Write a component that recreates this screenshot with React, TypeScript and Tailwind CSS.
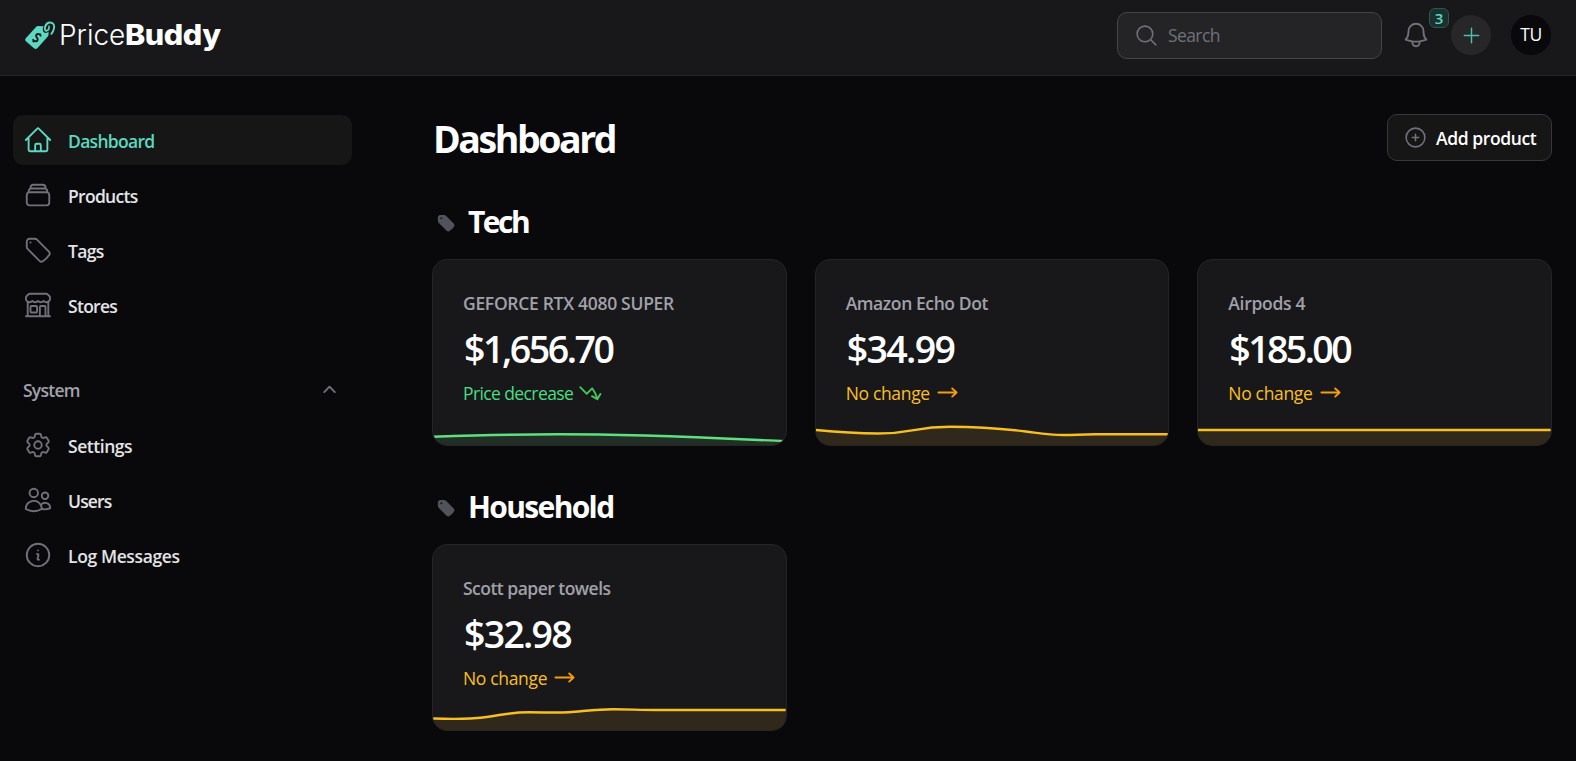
import type { ComponentType } from "react";
import {
  HiOutlineHome,
  HiOutlineRectangleStack,
  HiOutlineTag,
  HiOutlineBuildingStorefront,
  HiOutlineCog6Tooth,
  HiOutlineUsers,
  HiOutlineInformationCircle,
  HiOutlineMagnifyingGlass,
  HiOutlineBell,
  HiOutlinePlus,
  HiOutlinePlusCircle,
  HiTag,
  HiMiniChevronUp,
  HiMiniArrowLongRight,
  HiMiniArrowTrendingDown,
} from "react-icons/hi2";

type Icon = ComponentType<{ className?: string }>;

function Logo() {
  return (
    <div className="flex items-center">
      <svg viewBox="0 0 31 29" className="h-[29px] w-[31px]" fill="none">
        <path
          d="M13 5.1 18.6 5.2C17.6 7 17.4 9.4 18.6 11 20 12.6 22.4 12.2 23.5 10.6L23.6 13Q23.6 14.6 22.8 15.6L12.3 27.2Q10.7 28.6 9 27.2L.9 20.2Q-.5 18.7 .8 17.2L11 6Q11.8 5.1 13 5.1Z"
          fill="#5cd9c0"
        />
        <path d="M21.2 9.8C18.6 9.2 19.8 2.4 24.4 1.5 28.8 1 30.4 5 28.4 9.4 27.8 10.8 27.2 11.8 26.4 12.8" stroke="#5cd9c0" strokeWidth="1.9" strokeLinecap="round" />
        <path d="M21.2 9.8C23.4 9.4 24.4 7.4 24 5.2" stroke="#5cd9c0" strokeWidth="1.6" strokeLinecap="round" />
        <path
          d="M15.9 15.4C15.5 13 12.2 12.2 11.2 14 10.2 16.2 13.6 17 12.6 19.2 11.6 21 8.4 20.4 7.8 18.2M15.6 12.6 14 14.2M9.4 19.4 7.8 21"
          stroke="#18181b"
          strokeWidth="1.9"
        />
      </svg>
      <div className="ml-[3px] flex font-['Inter'] text-[28px] leading-[34px] text-white">
        <span className="w-[66px] font-light">Price</span>
        <span className="origin-left scale-x-[1.09] font-extrabold tracking-[-0.4px]">Buddy</span>
      </div>
    </div>
  );
}

function Header() {
  return (
    <header className="flex h-[76px] items-center border-b border-[#252528] bg-[#18181b] pr-[25px] pb-[5px] pl-[25px]">
      <Logo />
      <div className="ml-auto flex h-[47px] w-[265px] items-center gap-[9px] rounded-[10px] border border-[#454548] bg-[#242427] pl-[16px]">
        <HiOutlineMagnifyingGlass className="size-[25px] text-[#71717a]" />
        <span className="text-[17.5px] tracking-[-0.6px] text-[#71717a]">Search</span>
      </div>
      <div className="relative ml-[19px]">
        <HiOutlineBell className="size-[30px] text-[#71717a]" />
        <span className="absolute -top-[12px] left-[28px] flex h-[20px] w-[20px] items-center justify-center rounded-[6px] border border-[#285a52] bg-[#1c302f] text-[15px] font-semibold text-[#5cd9c0]">
          3
        </span>
      </div>
      <div className="ml-[20px] flex size-[40px] items-center justify-center rounded-full bg-[#27272a]">
        <HiOutlinePlus className="size-[23px] text-[#4cc0a8]" />
      </div>
      <div className="ml-[20px] flex size-[40px] items-center justify-center rounded-full bg-[#09090b] pb-[2px] text-[17.5px] tracking-[-0.5px] text-white">
        TU
      </div>
    </header>
  );
}

function NavItem({ icon: IconShape, label, spacing, active }: { icon: Icon; label: string; spacing: string; active?: boolean }) {
  return (
    <li
      className={`flex h-[50px] items-center gap-[15px] rounded-[10px] px-[10px] text-[17.5px] font-semibold ${spacing} ${
        active ? "bg-[#161616] text-[#5cd9c0]" : "text-[#e4e4e7]"
      }`}
    >
      <IconShape className={`size-[30px] ${active ? "text-[#5cd9c0]" : "text-[#71717a]"}`} />
      <span className="pt-[2px]">{label}</span>
    </li>
  );
}

function Sidebar() {
  return (
    <nav className="w-[352px] shrink-0 pt-[39px] pl-[13px]">
      <ul className="flex flex-col gap-[5px]">
        <NavItem icon={HiOutlineHome} label="Dashboard" spacing="tracking-[-0.7px]" active />
        <NavItem icon={HiOutlineRectangleStack} label="Products" spacing="tracking-[-0.7px]" />
        <NavItem icon={HiOutlineTag} label="Tags" spacing="tracking-[-0.7px]" />
        <NavItem icon={HiOutlineBuildingStorefront} label="Stores" spacing="tracking-[-0.7px]" />
      </ul>
      <div className="mt-[35px] flex h-[50px] items-center justify-between pr-[10px] pl-[10px]">
        <span className="text-[17.5px] font-semibold tracking-[-0.75px] text-[#a1a1aa]">System</span>
        <HiMiniChevronUp className="size-[25px] text-[#71717a]" />
      </div>
      <ul className="mt-[5px] flex flex-col gap-[5px]">
        <NavItem icon={HiOutlineCog6Tooth} label="Settings" spacing="tracking-[-0.45px]" />
        <NavItem icon={HiOutlineUsers} label="Users" spacing="tracking-[-0.85px]" />
        <NavItem icon={HiOutlineInformationCircle} label="Log Messages" spacing="tracking-[-0.38px]" />
      </ul>
    </nav>
  );
}

type Product = { name: string; price: string; nameSpacing: string; priceSpacing: string; down?: boolean; line: string };

const tech: Product[] = [
  {
    name: "GEFORCE RTX 4080 SUPER",
    price: "$1,656.70",
    nameSpacing: "tracking-[-0.3px]",
    priceSpacing: "tracking-[-2.45px]",
    down: true,
    line: "M0 15.7C45 14.3 80 13.3 125 13.3C215 13.3 280 17 353 20.2",
  },
  {
    name: "Amazon Echo Dot",
    price: "$34.99",
    nameSpacing: "tracking-[-0.4px]",
    priceSpacing: "tracking-[-1.65px]",
    line: "M0 9C20 11 40 12.5 62 12.5C98 12.5 98 5.7 134 5.7C165 5.7 190 8 210 10.5C226 12.6 232 14 248 14C262 14 262 13.3 280 13.3L353 13.3",
  },
  {
    name: "Airpods 4",
    price: "$185.00",
    nameSpacing: "tracking-[-0.3px]",
    priceSpacing: "tracking-[-2.6px]",
    line: "M0 9L353 9",
  },
];

const household: Product[] = [
  {
    name: "Scott paper towels",
    price: "$32.98",
    nameSpacing: "tracking-[-0.52px]",
    priceSpacing: "tracking-[-1.75px]",
    line: "M0 12.5C15 13 35 13.4 50 11.5C72 8.5 78 6.3 96 6.3C112 6.3 122 7 136 6.2C152 5 165 3.2 180 3.2C198 3.2 205 4 222 4L353 4",
  },
];

function ProductCard({ name, price, nameSpacing, priceSpacing, down, line }: Product) {
  return (
    <article className="flex h-[187px] flex-col overflow-hidden rounded-[15px] border border-[#252528] bg-[#18181b]">
      <div className="flex flex-col px-[30px] pt-[29px]">
        <h3 className={`text-[17.5px] leading-[28px] font-semibold whitespace-nowrap text-[#a1a1aa] ${nameSpacing}`}>{name}</h3>
        <p className={`mt-[9px] pl-[1px] text-[37.5px] leading-[45px] font-semibold text-white ${priceSpacing}`}>{price}</p>
        <div className={`mt-[7px] flex items-center text-[17.5px] leading-[26px] ${down ? "text-[#4ade80]" : "text-[#fbbf24]"}`}>
          <span className={`pt-[2px] ${down ? "mr-[5px] tracking-[-0.6px]" : "mr-[5px] tracking-[-0.33px]"}`}>{down ? "Price decrease" : "No change"}</span>
          {down ? (
            <HiMiniArrowTrendingDown className="size-[25px] text-[#43c659]" />
          ) : (
            <HiMiniArrowLongRight className="size-[25px] text-[#f59e0b]" />
          )}
        </div>
      </div>
      <svg viewBox="0 0 353 24" preserveAspectRatio="none" className="mt-auto h-[24px] w-full shrink-0" fill="none">
        <path d={`${line}V24H0Z`} fill={down ? "#232e26" : "#30281b"} />
        <path d={line} stroke={down ? "#5fe07f" : "#f7bf20"} strokeWidth="2.4" />
      </svg>
    </article>
  );
}

function Section({ title, spacing, products }: { title: string; spacing: string; products: Product[] }) {
  return (
    <section>
      <div className="flex h-[38px] items-center gap-[12px] pl-[4px]">
        <HiTag className="mt-[2px] size-[20px] text-[#52525b]" />
        <h2 className={`text-[30px] leading-[38px] font-bold text-white ${spacing}`}>{title}</h2>
      </div>
      <div className="mt-[18px] grid grid-cols-3 gap-[28px]">
        {products.map((p) => (
          <ProductCard key={p.name} {...p} />
        ))}
      </div>
    </section>
  );
}

export default function App() {
  return (
    <div className="h-[761px] w-[1576px] overflow-hidden bg-[#09090b] font-['Open_Sans','Noto_Sans',sans-serif]">
      <Header />
      <div className="flex">
        <Sidebar />
        <main className="ml-[80px] w-[1120px] pt-[38px]">
          <div className="flex h-[48px] items-start justify-between">
            <h1 className="pt-[1px] pl-[1px] text-[37.5px] leading-[48px] font-bold tracking-[-2.45px] text-white">Dashboard</h1>
            <button className="flex h-[47px] w-[165px] items-center gap-[8px] rounded-[10px] border border-[#38383b] bg-[#161616] pl-[15px] text-[17.5px] font-semibold tracking-[-0.4px] whitespace-nowrap text-white">
              <HiOutlinePlusCircle className="size-[25px] text-[#71717a]" />
              <span className="pt-[1px]">Add product</span>
            </button>
          </div>
          <div className="mt-[41px] flex flex-col gap-[42px]">
            <Section title="Tech" spacing="tracking-[-2.5px]" products={tech} />
            <Section title="Household" spacing="tracking-[-1.65px]" products={household} />
          </div>
        </main>
      </div>
    </div>
  );
}
